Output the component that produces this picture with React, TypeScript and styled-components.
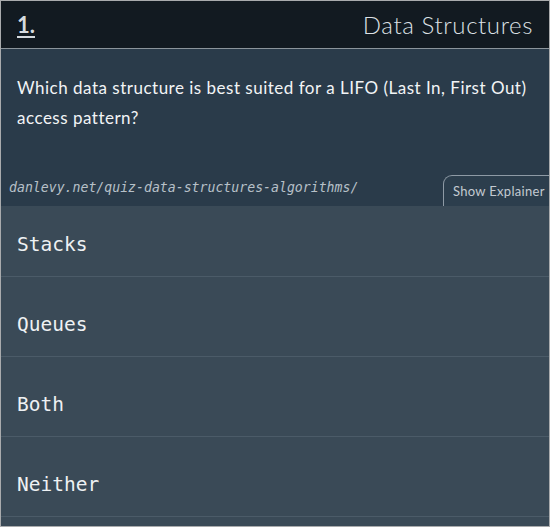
import React from "react";
import styled, { createGlobalStyle } from "styled-components";

const Global = createGlobalStyle`
  html, body { margin: 0; padding: 0; background: #ffffff; }
  * { box-sizing: border-box; }
`;

const Card = styled.div`
  width: 550px;
  height: 527px;
  border: 1px solid #a9abad;
  display: flex;
  flex-direction: column;
  background: #3a4a57;
  overflow: hidden;
`;

const Header = styled.header`
  height: 48px;
  flex: none;
  background: #121a21;
  border-bottom: 1px solid #8b949b;
  display: flex;
  align-items: center;
  justify-content: space-between;
  padding: 0 16px 0 16px;
`;

const Number = styled.span`
  font-family: Lato, "Open Sans", sans-serif;
  font-weight: 700;
  font-size: 22px;
  color: #d5dadf;
  text-decoration: underline;
  text-underline-offset: 3px;
  text-decoration-thickness: 2px;
`;

const Category = styled.h1`
  margin: 0;
  font-family: Lato, "Open Sans", sans-serif;
  font-weight: 300;
  font-size: 24px;
  letter-spacing: 0.6px;
  color: #dde1e5;
`;

const QuestionBox = styled.section`
  height: 157px;
  flex: none;
  background: #2a3b4a;
  display: flex;
  flex-direction: column;
  padding-top: 24px;
`;

const QuestionText = styled.p`
  margin: 0;
  padding: 0 16px;
  font-family: Lato, "Open Sans", sans-serif;
  font-size: 17px;
  letter-spacing: 0.5px;
  line-height: 30px;
  color: #f2f4f6;
`;

const Footer = styled.div`
  margin-top: auto;
  display: flex;
  align-items: flex-end;
  justify-content: space-between;
  padding-left: 8px;
`;

const Url = styled.span`
  font-family: "DejaVu Sans Mono", monospace;
  font-style: italic;
  font-size: 13.2px;
  color: #b7c0c8;
  padding-bottom: 11px;
`;

const ExplainerTab = styled.button`
  height: 31px;
  width: 106px;
  border: 1px solid #8e9aa5;
  border-right: none;
  border-bottom: none;
  border-radius: 9px 0 0 0;
  background: #2c3e4d;
  color: #c3cad1;
  font-family: Lato, "Open Sans", sans-serif;
  font-size: 13px;
  letter-spacing: 0.3px;
  padding: 0 0 0 9px;
  text-align: left;
  cursor: pointer;
`;

const AnswerList = styled.ul`
  list-style: none;
  margin: 0;
  padding: 0;
  flex: 1;
  background: #3a4a57;
`;

const Answer = styled.li`
  height: 80px;
  border-bottom: 1px solid #4b5b68;
  display: flex;
  align-items: center;
  padding: 16px 16px 0 16px;
  font-family: "DejaVu Sans Mono", monospace;
  font-size: 19.5px;
  color: #eef1f3;
  &:first-child {
    height: 71px;
    padding-top: 7px;
  }
`;

const answers = ["Stacks", "Queues", "Both", "Neither"];

export default function App() {
  return (
    <>
      <Global />
      <Card>
        <Header>
          <Number>1.</Number>
          <Category>Data Structures</Category>
        </Header>
        <QuestionBox>
          <QuestionText>
            Which data structure is best suited for a LIFO (Last In, First Out) access pattern?
          </QuestionText>
          <Footer>
            <Url>danlevy.net/quiz-data-structures-algorithms/</Url>
            <ExplainerTab>Show Explainer</ExplainerTab>
          </Footer>
        </QuestionBox>
        <AnswerList>
          {answers.map((a) => (
            <Answer key={a}>{a}</Answer>
          ))}
        </AnswerList>
      </Card>
    </>
  );
}
